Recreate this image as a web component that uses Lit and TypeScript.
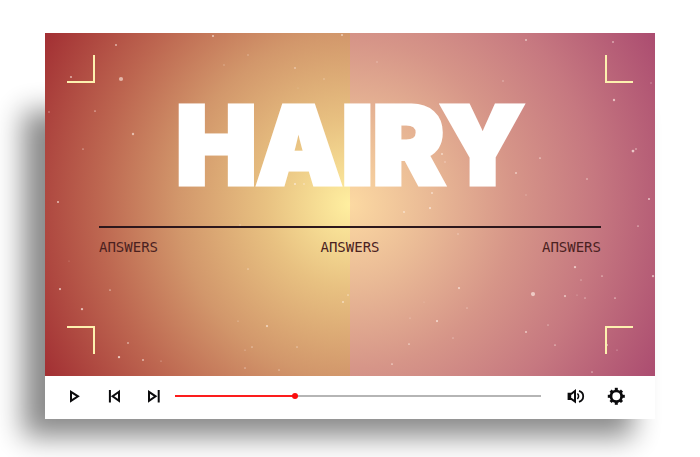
import { LitElement, html, css, svg } from "lit";
import { customElement, state } from "lit/decorators.js";

// Dust specks on the stage: x, y, radius, opacity in a 610 x 343 space.
const SPECKS: number[][] = [
  [76, 46, 2.1, 0.6], [26, 44, 1.1, 0.6], [71, 12, 1, 0.6], [168, 3, 1, 0.7], [297, 2, 1, 0.6],
  [203, 22, 0.8, 0.4], [179, 32, 0.8, 0.35], [250, 35, 0.9, 0.5], [279, 46, 0.7, 0.5], [253, 55, 0.6, 0.3],
  [4, 79, 0.8, 0.5], [50, 78, 0.9, 0.5], [88, 101, 1.2, 0.6], [38, 116, 0.9, 0.4], [13, 169, 1, 0.7],
  [250, 151, 1, 0.7], [259, 151, 0.8, 0.7], [195, 192, 0.8, 0.4], [481, 7, 1, 0.6], [332, 29, 0.8, 0.4],
  [458, 48, 0.8, 0.5], [568, 9, 1, 0.5], [606, 50, 0.8, 0.4], [569, 67, 1.2, 0.65], [588, 118, 1.4, 0.7],
  [591, 116, 1, 0.4], [495, 125, 0.9, 0.6], [471, 140, 1, 0.6], [542, 146, 1, 0.4], [481, 162, 0.7, 0.4],
  [604, 166, 1, 0.7], [593, 193, 0.9, 0.5], [387, 160, 1, 0.6], [385, 175, 1.1, 0.7], [359, 179, 1, 0.6],
  [397, 121, 1, 0.6], [400, 129, 0.8, 0.5], [324, 111, 0.7, 0.6], [321, 135, 0.7, 0.6],
  [15, 256, 1.1, 0.7], [65, 257, 0.9, 0.5], [37, 276, 1.2, 0.7], [24, 228, 0.6, 0.3], [83, 310, 1, 0.5],
  [74, 324, 1.2, 0.75], [98, 327, 1, 0.6], [116, 328, 0.7, 0.5], [203, 236, 0.8, 0.5], [193, 288, 0.7, 0.5],
  [222, 293, 1.1, 0.65], [207, 314, 0.8, 0.5], [200, 317, 0.7, 0.5], [200, 335, 0.8, 0.5], [234, 337, 0.8, 0.5],
  [252, 314, 0.8, 0.5], [298, 269, 1, 0.6], [303, 262, 0.8, 0.6],
  [413, 201, 0.8, 0.5], [530, 234, 1.2, 0.65], [557, 243, 0.9, 0.5], [536, 247, 0.8, 0.4], [608, 243, 1.2, 0.6],
  [488, 261, 2.1, 0.65], [520, 263, 1.1, 0.6], [532, 262, 0.7, 0.4], [540, 265, 0.8, 0.5], [570, 265, 0.9, 0.55],
  [414, 255, 1.1, 0.65], [379, 269, 0.6, 0.3], [422, 275, 0.8, 0.4], [365, 285, 0.7, 0.5], [392, 288, 1.1, 0.7],
  [408, 305, 0.8, 0.4], [364, 311, 0.9, 0.6], [347, 331, 0.9, 0.6], [481, 299, 1, 0.65], [503, 292, 0.8, 0.45],
  [510, 312, 0.9, 0.5], [562, 312, 1, 0.6], [572, 317, 0.7, 0.5], [547, 339, 0.8, 0.6],
];

const ICONS = {
  play: svg`<path d="M9 7.8 L16 12.3 L9 16.8 Z" />`,
  previous: svg`<path d="M7.9 6 V18.5 M17 7.8 L10.6 12.3 L17 16.8 Z" />`,
  next: svg`<path d="M7 7.8 L13.6 12.3 L7 16.8 Z M16.7 6 V18.5" />`,
  volume: svg`
    <path d="M4.6 9.7 H7.4 L11 7 V17.6 L7.4 14.9 H4.6 Z" />
    <path class="fill" d="M4 9 H7.2 V15.6 H4 Z" />
    <path d="M13.4 9.6 Q15.8 12.2 13.4 15" stroke-width="1.5" />
    <path d="M15 6.8 C20.6 8.4 20.6 16.2 15 17.8" stroke-width="1.8" />`,
  settings: svg`
    <circle cx="12.3" cy="12.3" r="5.3" stroke-width="2.7" />
    ${[0, 45, 90, 135, 180, 225, 270, 315].map(
      (a) => svg`<rect class="fill" x="10.8" y=${a % 90 ? 4.2 : 3.8} width="3" height="3.2" transform="rotate(${a} 12.3 12.3)" />`
    )}`,
};

@customElement("app-root")
export class AppRoot extends LitElement {
  @state() private progress = 32.5;

  static styles = css`
    :host {
      display: block;
      background: #fff;
      overflow: hidden;
      padding: 33px 45px 39px;
      font-family: Inter, "Liberation Sans", sans-serif;
    }
    * {
      box-sizing: border-box;
    }
    .player {
      position: relative;
      isolation: isolate;
    }
    .player::before {
      content: "";
      position: absolute;
      z-index: -1;
      inset: 78px 22px -18px -22px;
      background: #000;
      opacity: 0.46;
      filter: blur(14px);
    }
    .stage {
      position: relative;
      aspect-ratio: 16 / 9;
      overflow: hidden;
      display: flex;
      flex-direction: column;
      padding: 70px 54px 0;
      background:
        radial-gradient(circle farthest-corner at 100% 50%, #ffefa0 0%, #e8c181 24%, #d2976b 49%, #bd6650 72%, #a22f33 100%) left / 50% 100% no-repeat,
        radial-gradient(circle farthest-corner at 0% 50%, #fcd9a2 0%, #eabb96 22%, #d69588 47%, #c67880 70%, #ab4c70 100%) right / 50% 100% no-repeat;
    }
    .specks {
      position: absolute;
      inset: 0;
      width: 100%;
      height: 100%;
      fill: #fff0e8;
    }
    .corner {
      position: absolute;
      width: 28px;
      height: 28px;
      border: 0 solid #fdf1af;
    }
    .top { top: 22px; border-bottom-width: 2px; }
    .bottom { bottom: 22px; border-top-width: 2px; }
    .left { left: 22px; border-right-width: 2px; }
    .right { right: 22px; border-left-width: 2px; }
    h1 {
      position: relative;
      margin: 0;
      font-size: 107px;
      font-weight: 900;
      line-height: 84px;
      text-align: center;
      color: #fff;
      -webkit-text-stroke: 5px #fff;
    }
    .answers {
      position: relative;
      display: flex;
      justify-content: space-between;
      margin: 39px 0 0;
      padding: 10px 0 0;
      border-top: 2px solid #2c171c;
      list-style: none;
      font: 14px/18px "DejaVu Sans Mono", monospace;
      color: #4a211f;
    }
    .controls {
      display: flex;
      align-items: center;
      gap: 16px;
      height: 43px;
      padding: 0 27px 3px 17px;
      background: #fff;
    }
    button {
      width: 24px;
      height: 24px;
      padding: 0;
      border: 0;
      background: none;
      cursor: pointer;
    }
    .icon {
      display: block;
      width: 24px;
      height: 24px;
      fill: none;
      stroke: #0b0b0d;
      stroke-width: 2;
    }
    .icon .fill {
      fill: #0b0b0d;
      stroke: none;
    }
    .seek {
      flex: 1;
      min-width: 0;
      height: 12px;
      margin: 0 7px 0 -7px;
      appearance: none;
      background: none;
      cursor: pointer;
    }
    .seek::-webkit-slider-runnable-track {
      height: 2px;
      background: linear-gradient(to right, #fc1d1d var(--played), #b5b5b5 var(--played));
    }
    .seek::-webkit-slider-thumb {
      appearance: none;
      width: 6px;
      height: 6px;
      margin-top: -2px;
      border-radius: 50%;
      background: #fb0d0d;
    }
  `;

  private button(label: string, icon: keyof typeof ICONS) {
    return html`<button type="button" aria-label=${label}>
      <svg class="icon" viewBox="0 0 24 24" aria-hidden="true">${ICONS[icon]}</svg>
    </button>`;
  }

  private onSeek(e: Event) {
    this.progress = Number((e.target as HTMLInputElement).value);
  }

  render() {
    return html`
      <main class="player">
        <section class="stage">
          <svg class="specks" viewBox="0 0 610 343" preserveAspectRatio="none" aria-hidden="true">
            ${SPECKS.map(([x, y, r, o]) => svg`<circle cx=${x} cy=${y} r=${r} opacity=${o} />`)}
          </svg>
          <span class="corner top left"></span>
          <span class="corner top right"></span>
          <span class="corner bottom left"></span>
          <span class="corner bottom right"></span>
          <h1>HAIRY</h1>
          <ul class="answers">
            <li>AПSWERS</li>
            <li>AПSWERS</li>
            <li>AПSWERS</li>
          </ul>
        </section>
        <div class="controls">
          ${this.button("Play", "play")}
          ${this.button("Previous", "previous")}
          ${this.button("Next", "next")}
          <input class="seek" type="range" min="0" max="100" step="0.1" aria-label="Seek"
            .value=${String(this.progress)} style="--played: ${this.progress}%" @input=${this.onSeek} />
          ${this.button("Volume", "volume")}
          ${this.button("Settings", "settings")}
        </div>
      </main>
    `;
  }
}
